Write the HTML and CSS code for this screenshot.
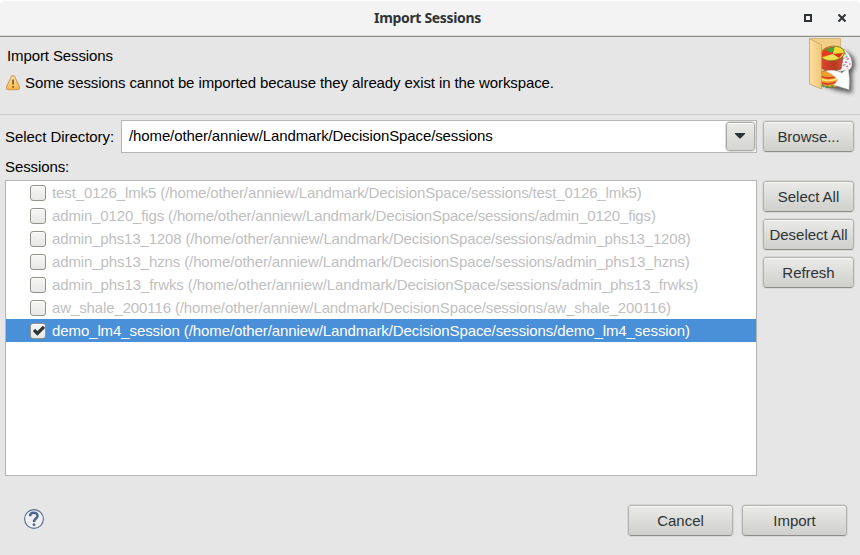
FILE: index.html
```html
<!DOCTYPE html>
<html lang="en">
<head>
<meta charset="utf-8">
<title>Import Sessions</title>
<link rel="stylesheet" href="styles.css">
</head>
<body>
<div class="window">
  <div class="titlebar">
    <div class="title">Import Sessions</div>
    <div class="controls">
      <svg width="8" height="8" viewBox="0 0 8 8"><rect x="1" y="1" width="6" height="6" fill="none" stroke="#2e3436" stroke-width="2"/></svg>
      <svg width="8" height="8" viewBox="0 0 8 8"><path d="M.5.5 7.5 7.5M7.5.5.5 7.5" stroke="#2e3436" stroke-width="2.1"/></svg>
    </div>
  </div>
  <header class="header">
    <div class="messages">
      <div class="heading">Import Sessions</div>
      <div class="warning">
        <svg width="16" height="16" viewBox="0 0 16 16">
          <defs><linearGradient id="wg" x2="0" y2="1"><stop stop-color="#ffe9b4"/><stop offset="1" stop-color="#fcb540"/></linearGradient></defs>
          <path d="M6.4 1.6Q8 -.2 9.6 1.6L14.4 11.8Q15 14.5 13 14.6H3Q1 14.5 1.6 11.8Z" fill="url(#wg)" stroke="#d39c62" stroke-width="1.2"/>
          <path d="M7.1 4.4h1.9v5.2H7.1zM7.1 11h1.9v1.7H7.1z" fill="#8c6131"/>
        </svg>
        <span>Some sessions cannot be imported because they already exist in the workspace.</span>
      </div>
    </div>
    <svg class="banner" width="54" height="62" viewBox="0 0 54 62">
      <defs>
        <filter id="sh" x="-30%" y="-30%" width="170%" height="170%"><feGaussianBlur stdDeviation="2"/></filter>
        <linearGradient id="fold" x2="1" y2="0"><stop stop-color="#ffdf9a"/><stop offset="1" stop-color="#efc77c"/></linearGradient>
        <linearGradient id="red" x2="1" y2="0"><stop stop-color="#e0482c"/><stop offset=".6" stop-color="#b93824"/><stop offset="1" stop-color="#cf5438"/></linearGradient>
      </defs>
      <path d="M16 48 36 14Q49 16 49 29L46 36 46 56 30 53Z" fill="#333" opacity=".8" filter="url(#sh)"/>
      <path d="M3.5 1.5 34.5 1.5V38L15 49Z" fill="#f3cd85" stroke="#c9a96c" stroke-width=".7"/>
      <path d="M28 11Q40 9 45 21Q48 30 43 33L30 35Z" fill="#f7f3f3" stroke="#9a9a9a" stroke-width=".7"/>
      <path d="M33 13l3 3 3-1 1 5 3 1-3 4 4 2-4 3-3-2-1-4 2-3-3-2z" fill="none" stroke="#dc70c5" stroke-width="1.2" stroke-dasharray="2 2"/>
      <path d="M36 13l6 8-4 6 4 3" fill="none" stroke="#62bd60" stroke-width="1.2" stroke-dasharray="1.5 2"/>
      <path d="M15 20V31Q24 37 35 32L37 19Z" fill="url(#red)" stroke="#7d3420" stroke-width=".6"/>
      <ellipse cx="26.5" cy="16.5" rx="12" ry="7.3" transform="rotate(-7 26.5 16.5)" fill="#e7c829" stroke="#75602d" stroke-width=".7"/>
      <path d="M15 16Q20 9 28 10L27 17 16 20Z" fill="#e63822"/>
      <path d="M19 13Q24 10 29 10L26 16Z" fill="#43a73c"/>
      <path d="M29 10Q37 11 37 15L27 17Z" fill="#f3d933"/>
      <path d="M27 17 17 21Q25 25 35 20Z" fill="#eee056"/>
      <path d="M27 17 37 16 33 21Z" fill="#d3351f"/>
      <path d="M14 36Q21 31 34 35V48Q26 54 14 47Z" fill="#ef9f2b" stroke="#8a5526" stroke-width=".7"/>
      <path d="M14 39Q22 43 32 39M14 45Q21 49 30 45" fill="none" stroke="#d44327" stroke-width="1.8"/>
      <path d="M15 42Q21 45 31 42" fill="none" stroke="#ffe77a" stroke-width="1.6"/>
      <path d="M15 48Q22 52 31 48" fill="none" stroke="#3e9b49" stroke-width="2" stroke-dasharray="3 2"/>
      <path d="M3.5 1.5 15.5 8V52L3.5 47Z" fill="url(#fold)" stroke="#bd9a5a" stroke-width=".7"/>
      <path d="M20 34Q29 32 36 36L42 31Q44 40 43 52.5L28 48 32 43Q27 37 20 34Z" fill="#fff" stroke="#ccc" stroke-width=".6"/>
    </svg>
  </header>
  <main class="content">
    <div class="directory-label">Select Directory:</div>
    <div class="combo">
      <div class="path">/home/other/anniew/Landmark/DecisionSpace/sessions</div>
      <button class="drop" aria-label="Choose directory"><svg width="10" height="6" viewBox="0 0 10 6"><path d="M0 0h10v1L5.5 5.5h-1L0 1z" fill="#2e3436"/></svg></button>
    </div>
    <button class="button browse">Browse...</button>
    <div class="sessions-label">Sessions:</div>
    <div class="list">
      <div class="row"><i class="check"></i><span>test_0126_lmk5 (/home/other/anniew/Landmark/DecisionSpace/sessions/test_0126_lmk5)</span></div>
      <div class="row snug"><i class="check"></i><span>admin_0120_figs (/home/other/anniew/Landmark/DecisionSpace/sessions/admin_0120_figs)</span></div>
      <div class="row snug"><i class="check"></i><span>admin_phs13_1208 (/home/other/anniew/Landmark/DecisionSpace/sessions/admin_phs13_1208)</span></div>
      <div class="row"><i class="check"></i><span>admin_phs13_hzns (/home/other/anniew/Landmark/DecisionSpace/sessions/admin_phs13_hzns)</span></div>
      <div class="row loose"><i class="check"></i><span>admin_phs13_frwks (/home/other/anniew/Landmark/DecisionSpace/sessions/admin_phs13_frwks)</span></div>
      <div class="row"><i class="check"></i><span>aw_shale_200116 (/home/other/anniew/Landmark/DecisionSpace/sessions/aw_shale_200116)</span></div>
      <div class="row loose selected"><i class="check"><svg width="14" height="14" viewBox="0 0 14 14"><path d="M3 6 6.4 9.4 13 2.8" fill="none" stroke="#2e3436" stroke-width="3.2"/></svg></i><span>demo_lm4_session (/home/other/anniew/Landmark/DecisionSpace/sessions/demo_lm4_session)</span></div>
    </div>
    <div class="side">
      <button class="button">Select All</button>
      <button class="button">Deselect All</button>
      <button class="button">Refresh</button>
    </div>
  </main>
  <footer class="footer">
    <svg class="help" width="20" height="20" viewBox="0 0 20 20"><circle cx="10" cy="10" r="9.4" fill="#f0f1f3" stroke="#566b91" stroke-width="1.1"/><path d="M6 7.2C6 2.8 13.6 2.8 13.6 6.8 13.6 9.6 10 9.5 10 13" fill="none" stroke="#4d648f" stroke-width="2.5"/><circle cx="10" cy="15.7" r="1.4" fill="#4d648f"/></svg>
    <div class="actions">
      <button class="button wide">Cancel</button>
      <button class="button wide">Import</button>
    </div>
  </footer>
</div>
</body>
</html>
```
FILE: styles.css
```css
* { box-sizing: border-box; }
body { margin: 0; background: #fff; font: 15px/23px "Liberation Sans", Arial, sans-serif; letter-spacing: -.105px; color: #000; }
button { font: inherit; letter-spacing: -.03px; }
svg { display: block; flex: none; }
.window { width: 860px; height: 555px; overflow: hidden; background: #e6e6e6; border-radius: 6px 6px 0 0; display: flex; flex-direction: column; }
.titlebar { height: 37px; flex: none; display: grid; grid-template-columns: 1fr auto 1fr; align-items: center; background: #f3f3f3; border-top: 1px solid #fff; border-bottom: 1px solid #8b8c84; box-shadow: inset 0 -1px #dcdcda; border-radius: 6px 6px 0 0; padding-bottom: 2px; }
.title { grid-column: 2; margin-left: -5px; font: bold 14px/20px "Noto Sans", sans-serif; letter-spacing: -.33px; color: #2e3436; }
.controls { display: flex; justify-content: flex-end; gap: 26px; padding-right: 14px; }
.header { height: 78px; flex: none; display: flex; justify-content: space-between; border-bottom: 1px solid #cbcbcb; padding-left: 5px; }
.messages { padding-top: 7px; }
.heading { padding-left: 2px; }
.warning { display: flex; align-items: center; gap: 4px; margin-top: 4px; }
.content { height: 361px; flex: none; padding: 5px 5px 0; display: grid; grid-template-columns: 116px 636px 93px; grid-template-rows: 33px 27px 296px; }
.directory-label { align-self: center; letter-spacing: -.06px; }
.combo { display: flex; border: 1px solid #b6b6b3; background: #fff; }
.path { flex: 1; padding: 3px 7px; letter-spacing: -.115px; }
.drop { width: 29px; margin: 1px; padding: 0 2px 2px 0; display: grid; place-items: center; border: 1px solid #a9a9a5; border-radius: 3px; background: linear-gradient(#eaeae8, #d4d4d1); box-shadow: inset 0 1px #fafafa; outline: 1px solid #dcdcda; }
.button { width: 91px; height: 31px; margin: 1px; padding: 0; border: 1px solid #b0b0ad; border-bottom-color: #8d8d8a; border-radius: 3px; background: linear-gradient(#eaeae8, #cfcfcc); outline: 1px solid #d7d7d6; box-shadow: inset 0 1px #fafafa; color: #2e3436; white-space: nowrap; }
.browse { margin-left: 6px; }
.sessions-label { grid-column: 1 / 4; padding-top: 2px; }
.list { grid-column: 1 / 3; border: 1px solid #b6b6b3; background: #fff; }
.row { height: 23px; padding-left: 24px; display: flex; align-items: center; gap: 6px; color: #c0c0bf; letter-spacing: -.12px; white-space: nowrap; }
.snug { letter-spacing: -.148px; }
.loose { letter-spacing: -.096px; }
.check { width: 16px; height: 16px; flex: none; border: 1px solid #92928a; border-radius: 3px; background: linear-gradient(#f6f6f5, #e8e8e6); box-shadow: inset 0 1px #fff; }
.selected { background: #4a90d9; color: #fff; }
.side { margin-left: 5px; display: flex; flex-direction: column; gap: 7px; }
.side .button { margin: 0 1px; }
.side .button:first-child { margin-top: 1px; }
.footer { flex: 1; display: flex; justify-content: space-between; padding: 28px 12px 0 24px; }
.help { margin-top: 5px; }
.actions { display: flex; gap: 7px; }
.wide { width: 105px; }
```
